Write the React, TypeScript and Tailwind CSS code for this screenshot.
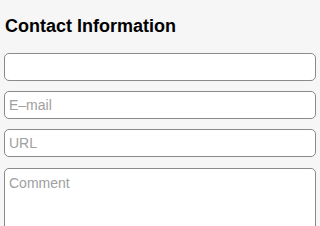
export default function App() {
  const field =
    "block w-full h-[28px] rounded-[5px] border border-[#8a8a8a] bg-white px-[4px] text-[14px] text-[#333] placeholder:text-[#a0a0a0] outline-none";

  return (
    <div className="h-[226px] w-[320px] overflow-hidden bg-[#f6f6f6] px-[4px] pt-[14px] font-['Liberation_Sans',Arial,sans-serif]">
      <h2 className="pl-[1px] text-[18px] font-bold leading-[24px] text-black">Contact Information</h2>
      <div className="mt-[15px] flex flex-col gap-[10px] w-[312px]">
        <input type="text" className={field} />
        <input type="email" placeholder="E–mail" className={field} />
        <input type="url" placeholder="URL" className={field} />
        <textarea
          placeholder="Comment"
          className="mt-[1px] block h-[80px] w-full resize-none rounded-[5px] border border-[#8a8a8a] bg-white px-[4px] pt-[4px] text-[14px] text-[#333] placeholder:text-[#a0a0a0] outline-none"
        />
      </div>
    </div>
  );
}
